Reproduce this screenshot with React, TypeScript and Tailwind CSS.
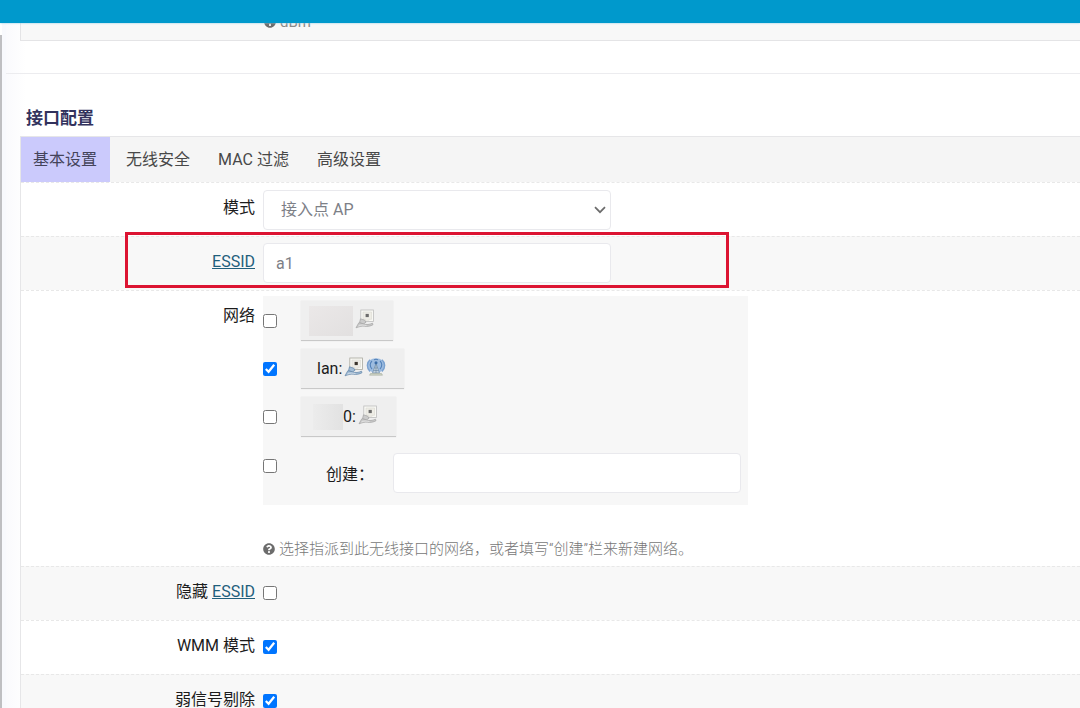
import React from "react";

function HelpIcon() {
  return (
    <svg viewBox="0 0 512 512" className="h-3 w-3 shrink-0" fill="#6c6c6c" aria-hidden="true">
      <path d="M504 256c0 137-111 248-248 248S8 393 8 256 119 8 256 8s248 111 248 248zM262.7 90c-54.500 0-89.200 23-116.500 63.800-3.500 5.300-2.400 12.400 2.700 16.300l34.700 26.300c5.200 3.900 12.600 3 16.700-2.100 17.900-22.700 30.100-35.800 57.300-35.800 20.400 0 45.700 13.100 45.700 33 0 15-12.400 22.700-32.500 34C247.100 238.500 216 254.900 216 296v4c0 6.600 5.400 12 12 12h56c6.600 0 12-5.400 12-12v-1.300c0-28.500 83.200-29.600 83.200-106.700 0-58-60.200-102-116.500-102zM256 338c-25.400 0-46 20.600-46 46s20.600 46 46 46 46-20.600 46-46-20.600-46-46-46z" />
    </svg>
  );
}

function PortIcon({ active = false }: { active?: boolean }) {
  const cable = active ? "#a3bdd6" : "#cbcbcb";
  const edge = active ? "#5f82a6" : "#a2a2a2";
  const box = active ? "#a9a89e" : "#bdbdbd";
  return (
    <svg viewBox="0 0 20 20" className="h-5 w-5 shrink-0" aria-hidden="true">
      <rect x="5.800" y="1" width="12.700" height="11.500" fill="#f8f8f4" stroke={box} strokeWidth="0.800" />
      <path d="M8 3h8.500v7.300H14v1h-3.500v-1H8z" fill="#eeede6" stroke="#d6d5cd" strokeWidth="0.500" />
      <rect x="10.600" y="4.900" width="3.200" height="3.200" fill={active ? "#3c352c" : "#6c6c6c"} />
      <path d="M5.500 9.800l4.300 1.400 1.200 2-2.300 1.600-4.200-1z" fill={cable} stroke={edge} strokeWidth="0.700" />
      <path
        d="M1 18.800l2.800-5 4.500 1c3.400 1.200 6 .8 9.200-.6l.5 1.500c-2.600 1.500-5.300 2-8.600 1.500-3-.4-5.600.7-8.400 1.600z"
        fill={cable}
        stroke={edge}
        strokeWidth="0.700"
      />
      <path d="M3.500 17c2.600-1.200 5-1 8-.4" fill="none" stroke="#f1f1f1" strokeWidth="0.600" />
    </svg>
  );
}

function WifiIcon() {
  return (
    <svg viewBox="0 0 20 20" className="h-5 w-5 shrink-0" aria-hidden="true">
      <ellipse cx="10" cy="8.500" rx="9" ry="7.300" fill="#9dbce0" />
      <path d="M4 14.500C.4 11 .5 5.500 4 2.700M16 14.500c3.600-3.500 3.500-9 0-11.800" fill="none" stroke="#7ba2d0" strokeWidth="1.400" />
      <path d="M6 12C3.500 9.500 3.800 6 6 4M14 12c2.500-2.500 2.200-6 0-8M8 2.700c1.300-.5 2.700-.5 4 0" fill="none" stroke="#5382b9" strokeWidth="1.100" />
      <path d="M10 6.500L6.500 16h7z" fill="#c4d2de" stroke="#64839f" strokeWidth="0.600" />
      <path d="M8.500 11h3M7.600 13.500h4.800M10 7v9" stroke="#64839f" strokeWidth="0.600" />
      <circle cx="10" cy="5.800" r="1.500" fill="#3a6ca6" />
      <path d="M4.500 16.500h11l1 1.700h-13z" fill="#ced3c4" stroke="#98a192" strokeWidth="0.500" />
    </svg>
  );
}

const checkStyle = "block h-[14px] w-[14px] shrink-0 accent-[#0075ff]";
const boxStyle =
  "h-10 w-[348px] rounded-sm border border-[#e9e9ed] bg-white text-base text-[#7d8087] outline-none";

function Row({
  label,
  htmlFor,
  shaded = false,
  children,
}: {
  label: React.ReactNode;
  htmlFor?: string;
  shaded?: boolean;
  children: React.ReactNode;
}) {
  return (
    <div
      className={`flex min-h-[54px] items-start gap-2 border-t border-dashed border-[#e8e8e8] ${
        shaded ? "bg-[#f8f8f8]" : "bg-white"
      }`}
    >
      <label htmlFor={htmlFor} className="w-[234px] shrink-0 pt-[13px] text-right leading-6 text-[#1c1c1c]">
        {label}
      </label>
      {children}
    </div>
  );
}

function NetworkOption({
  id,
  checked = false,
  name,
  children,
}: {
  id: string;
  checked?: boolean;
  name: string;
  children: React.ReactNode;
}) {
  return (
    <li className="flex h-10 items-center gap-6">
      <input id={id} type="checkbox" defaultChecked={checked} aria-label={name} className={checkStyle} />
      <label
        htmlFor={id}
        className="flex h-10 items-center border-b border-[#c8c8c8] bg-[#efefef] px-4 text-base text-[#1c1c1c] shadow-[0_0_1px_#dddddd]"
      >
        {children}
      </label>
    </li>
  );
}

const tabs = ["基本设置", "无线安全", "MAC 过滤", "高级设置"];

export default function App() {
  return (
    <div className="flex h-screen flex-col overflow-hidden bg-white font-['Roboto','Noto_Sans_CJK_SC',sans-serif] text-base text-[#1c1c1c]">
      <header className="z-10 h-[23px] shrink-0 bg-[#0099cc] shadow-[0_0_2px_#8acbe2]" />
      <div className="flex min-h-0 flex-1">
        <div className="mt-3 w-[2px] shrink-0 bg-[#bfbfc2]" />
        <div className="w-1 shrink-0 bg-[#f8f9fd]" />
        <main className="min-w-0 flex-1">
          <section className="border-b border-[#ececef] bg-gradient-to-r from-[#fafafd] to-white to-[20px] pb-8 pl-[14px]">
            <div className="-mt-4 flex h-[34px] items-start gap-1 border-b border-l border-[#e4e4e6] bg-[#f8f8f8] pl-[243px] text-[15px] leading-[30px] text-[#8a8a8a]">
              <span className="flex h-[30px] items-center">
                <HelpIcon />
              </span>
              <span>dBm</span>
            </div>
          </section>

          <section className="bg-gradient-to-r from-[#fafafd] to-white to-[20px] pl-[14px] pt-8">
            <h3 className="pb-[6px] pl-[6px] text-[17px] font-bold leading-6 text-[#32325d]">接口配置</h3>
            <div className="border-l border-t border-[#e6e6e8]">
              <div role="tablist" className="flex h-[45px] gap-1 bg-[#f5f5f5]">
                {tabs.map((tab, i) => (
                  <button
                    key={tab}
                    type="button"
                    role="tab"
                    aria-selected={i === 0}
                    className={`text-base ${
                      i === 0 ? "bg-[#cbcafc] pl-3 pr-[13px] text-[#44445a]" : "px-3 text-[#484848]"
                    }`}
                  >
                    {tab}
                  </button>
                ))}
              </div>

              <Row label="模式" htmlFor="mode">
                <div className="relative mt-[7px]">
                  <select id="mode" className={`${boxStyle} appearance-none px-[17px]`}>
                    <option>接入点 AP</option>
                  </select>
                  <svg
                    viewBox="0 0 12 8"
                    className="pointer-events-none absolute right-[5px] top-4 h-2 w-3"
                    fill="none"
                    stroke="#6c6c6c"
                    strokeWidth="1.700"
                    aria-hidden="true"
                  >
                    <path d="M1 1.200l5 5 5-5" />
                  </svg>
                </div>
              </Row>

              <div className="relative">
                <Row
                  shaded
                  htmlFor="essid"
                  label={
                    <a href="#essid" className="text-[#1f5f7c] underline">
                      ESSID
                    </a>
                  }
                >
                  <input
                    id="essid"
                    type="text"
                    aria-label="ESSID"
                    defaultValue="a1"
                    className={`${boxStyle} mt-[6px] px-3`}
                  />
                </Row>
                <div className="pointer-events-none absolute -top-1 left-[104px] h-14 w-[604px] border-[3px] border-[#dc1432]" />
              </div>

              <Row label="网络">
                <div className="pb-[5px]">
                  <ul className="mt-[5px] flex w-[485px] flex-col gap-2 bg-[#f7f7f7] pb-3 pt-[5px]">
                    <NetworkOption id="net1" name="wan">
                      <span className="-ml-2 mr-[2px] h-[30px] w-11 bg-gradient-to-br from-[#ebe8e8] to-[#e2e0e0]" />
                      <span className="flex pb-1 pr-[2px]">
                        <PortIcon />
                      </span>
                    </NetworkOption>
                    <NetworkOption id="net2" name="lan" checked>
                      <span className="mr-[2px]">lan:</span>
                      <span className="flex gap-[2px] pb-1 pr-[2px]">
                        <PortIcon active />
                        <WifiIcon />
                      </span>
                    </NetworkOption>
                    <NetworkOption id="net3" name="0">
                      <span className="-ml-1 h-[26px] w-[30px] bg-gradient-to-r from-[#ececec] to-[#e2e2e2]" />
                      <span className="mr-[2px]">0:</span>
                      <span className="flex pb-1 pr-[2px]">
                        <PortIcon />
                      </span>
                    </NetworkOption>
                    <li className="flex items-start">
                      <input
                        id="net4"
                        type="checkbox"
                        aria-label="创建"
                        className={`${checkStyle} mt-[14px]`}
                      />
                      <label htmlFor="newnet" className="w-[116px] pl-[49px] pt-[18px] leading-6">
                        创建：
                      </label>
                      <input id="newnet" type="text" className={`${boxStyle} mt-2 px-3`} />
                    </li>
                  </ul>
                  <p className="flex items-center gap-1 pt-8 text-[15px] font-light leading-6 text-[#777777]">
                    <HelpIcon />
                    选择指派到此无线接口的网络，或者填写“创建”栏来新建网络。
                  </p>
                </div>
              </Row>

              <Row
                shaded
                htmlFor="hidden"
                label={
                  <>
                    隐藏{" "}
                    <a href="#essid" className="text-[#1f5f7c] underline">
                      ESSID
                    </a>
                  </>
                }
              >
                <input id="hidden" type="checkbox" className={`${checkStyle} mt-[19px]`} />
              </Row>
              <Row htmlFor="wmm" label="WMM 模式">
                <input id="wmm" type="checkbox" defaultChecked className={`${checkStyle} mt-[19px]`} />
              </Row>
              <Row shaded htmlFor="weak" label="弱信号剔除">
                <input id="weak" type="checkbox" defaultChecked className={`${checkStyle} mt-[19px]`} />
              </Row>
            </div>
          </section>
        </main>
      </div>
    </div>
  );
}
